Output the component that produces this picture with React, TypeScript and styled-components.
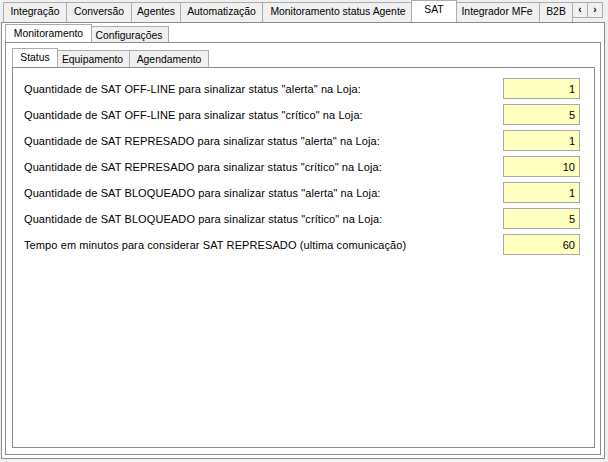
import React from 'react';
import styled, { createGlobalStyle } from 'styled-components';

const GlobalStyle = createGlobalStyle`
  html, body {
    margin: 0;
    padding: 0;
    background: #f0f0f0;
    font-family: "Liberation Sans", Arial, sans-serif;
    font-size: 11px;
    color: #000;
  }
`;

const Window = styled.div`
  width: 608px;
  height: 462px;
  box-sizing: border-box;
  padding: 0 3px 3px 1px;
  display: flex;
  flex-direction: column;
`;

const TabControl = styled.div`
  display: flex;
  flex-direction: column;
  flex: 1;
  min-height: 0;
`;

const Strip = styled.div<{ $height: number }>`
  display: flex;
  align-items: flex-end;
  height: ${(p) => p.$height}px;
  flex-shrink: 0;
`;

const TabList = styled.div`
  display: flex;
  align-items: flex-end;
  flex: 1;
  height: 100%;
  overflow: hidden;
  padding-left: 2px;
`;

// strip height drives the tab height: inactive tabs sit 2px lower,
// the active one is 1px taller than the strip and covers the panel border
const Tab = styled.div<{ $active?: boolean; $strip: number; $width: number }>`
  box-sizing: border-box;
  width: ${(p) => p.$width}px;
  height: ${(p) => (p.$active ? p.$strip + 1 : p.$strip - 2)}px;
  margin: ${(p) => (p.$active ? '0 -2px -1px -3px' : '0 0 0 -1px')};
  padding-top: 2px;
  border: 1px solid #acacac;
  border-bottom: none;
  background: ${(p) => (p.$active ? '#ffffff' : '#f0f0f0')};
  font-size: 10.4px;
  text-align: center;
  white-space: nowrap;
  overflow: hidden;
  line-height: 13px;
  flex-shrink: 0;
  position: ${(p) => (p.$active ? 'relative' : 'static')};
  z-index: ${(p) => (p.$active ? 1 : 0)};
  &:first-child {
    margin-left: ${(p) => (p.$active ? -2 : 0)}px;
  }
`;

const Scroller = styled.div`
  display: flex;
  align-self: flex-start;
  margin: 2px 2px 0 0;
`;

const ScrollButton = styled.div`
  box-sizing: border-box;
  width: 16px;
  height: 16px;
  border: 1px solid #acacac;
  background: #f0f0f0;
  margin-left: -1px;
  display: flex;
  align-items: center;
  justify-content: center;
  font-size: 10px;
  font-weight: bold;
  line-height: 1;
`;

const Panel = styled.div<{ $pad: string }>`
  flex: 1;
  min-height: 0;
  box-sizing: border-box;
  border: 1px solid #898c95;
  background: #ffffff;
  padding: ${(p) => p.$pad};
  display: flex;
  flex-direction: column;
`;

const Form = styled.div`
  display: flex;
  flex-direction: column;
  gap: 5px;
`;

const Row = styled.div`
  display: flex;
  align-items: center;
  justify-content: space-between;
  height: 21px;
`;

const Label = styled.span`
  white-space: nowrap;
  letter-spacing: 0.1px;
`;

const NumberBox = styled.div`
  box-sizing: border-box;
  width: 77px;
  height: 21px;
  border: 1px solid #a9a9a9;
  background: #ffffc0;
  text-align: right;
  padding: 3px 4px 0 0;
  line-height: 14px;
`;

const topTabs: [string, number][] = [
  ['Integração', 64],
  ['Conversão', 66],
  ['Agentes', 50],
  ['Automatização', 83],
  ['Monitoramento status Agente', 152],
  ['SAT', 46],
  ['Integrador MFe', 86],
  ['B2B', 34],
];

const rows: [string, string][] = [
  ['Quantidade de SAT OFF-LINE para sinalizar status "alerta" na Loja:', '1'],
  ['Quantidade de SAT OFF-LINE para sinalizar status "crítico" na Loja:', '5'],
  ['Quantidade de SAT REPRESADO para sinalizar status "alerta" na Loja:', '1'],
  ['Quantidade de SAT REPRESADO para sinalizar status "crítico" na Loja:', '10'],
  ['Quantidade de SAT BLOQUEADO para sinalizar status "alerta" na Loja:', '1'],
  ['Quantidade de SAT BLOQUEADO para sinalizar status "crítico" na Loja:', '5'],
  ['Tempo em minutos para considerar SAT REPRESADO (ultima comunicação)', '60'],
];

export default function App() {
  return (
    <>
      <GlobalStyle />
      <Window>
        <TabControl>
          <Strip $height={22}>
            <TabList>
              {topTabs.map(([t, w]) => (
                <Tab key={t} $strip={22} $width={w} $active={t === 'SAT'}>
                  {t}
                </Tab>
              ))}
            </TabList>
            <Scroller>
              <ScrollButton>&lsaquo;</ScrollButton>
              <ScrollButton>&rsaquo;</ScrollButton>
            </Scroller>
          </Strip>
          <Panel $pad="1px 3px 3px 3px">
            <TabControl>
              <Strip $height={18}>
                <TabList>
                  <Tab $strip={18} $width={87} $active>Monitoramento</Tab>
                  <Tab $strip={18} $width={80}>Configurações</Tab>
                </TabList>
              </Strip>
              <Panel $pad="5px 5px 6px 6px">
                <TabControl>
                  <Strip $height={19}>
                    <TabList>
                      <Tab $strip={19} $width={46} $active>Status</Tab>
                      <Tab $strip={19} $width={75}>Equipamento</Tab>
                      <Tab $strip={19} $width={80}>Agendamento</Tab>
                    </TabList>
                  </Strip>
                  <Panel $pad="10px 14px 0 11px">
                    <Form>
                      {rows.map(([label, value]) => (
                        <Row key={label}>
                          <Label>{label}</Label>
                          <NumberBox>{value}</NumberBox>
                        </Row>
                      ))}
                    </Form>
                  </Panel>
                </TabControl>
              </Panel>
            </TabControl>
          </Panel>
        </TabControl>
      </Window>
    </>
  );
}
